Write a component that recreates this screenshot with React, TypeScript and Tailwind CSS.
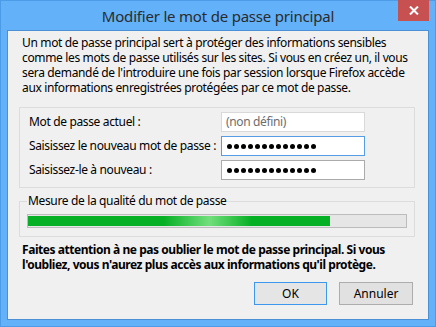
import React from 'react';

const font = { fontFamily: '"Noto Sans", "Open Sans", sans-serif' };

function Dots() {
  return (
    <div className="flex items-center gap-[2px] pl-[5px]">
      {Array.from({ length: 13 }).map((_, i) => (
        <span key={i} className="block w-[5px] h-[5px] rounded-full bg-black" />
      ))}
    </div>
  );
}

export default function App() {
  const intro = [
    'Un mot de passe principal sert à protéger des informations sensibles',
    'comme les mots de passe utilisés sur les sites. Si vous en créez un, il vous',
    "sera demandé de l'introduire une fois par session lorsque Firefox accède",
    'aux informations enregistrées protégées par ce mot de passe.',
  ];

  return (
    <div
      className="w-[436px] h-[327px] flex flex-col bg-[#62b1f9] border border-[#4c9be6] px-[6px] pb-[6px] text-black"
      style={font}
    >
      {/* title bar */}
      <div className="relative h-[29px] flex items-center justify-center">
        <span className="text-[15px] text-[#2b2b2b] tracking-[-0.2px] mt-[1px]">Modifier le mot de passe principal</span>
        <button className="absolute top-[-1px] right-0 w-[31px] h-[21px] bg-[#c75050] flex items-center justify-center">
          <svg width="10" height="9" viewBox="0 0 10 9">
            <path d="M1 0.5 L9 8.5 M9 0.5 L1 8.5" stroke="white" strokeWidth="2" />
          </svg>
        </button>
      </div>

      {/* client area */}
      <div className="flex-1 flex flex-col bg-[#f0f0f0] border border-[#4b8fd5]">
        <div className="pl-[14px] pt-[4px] text-[12px] leading-[15px] tracking-[-0.35px]">
          {intro.map((l) => (
            <div key={l} className="whitespace-nowrap">{l}</div>
          ))}
        </div>

        {/* fields group */}
        <div className="ml-[11px] mt-[12px] w-[396px] h-[81px] border border-[#dcdcdc] pt-[4px] flex flex-col gap-[4px] text-[12px] tracking-[-0.35px]">
          <div className="flex items-center h-[20px]">
            <div className="w-[201px] pl-[9px]">Mot de passe actuel :</div>
            <div className="w-[144px] h-[20px] bg-white border border-[#d9d9d9] flex items-center pl-[4px] text-[#6d6d6d]">
              (non défini)
            </div>
          </div>
          <div className="flex items-center h-[20px]">
            <div className="w-[201px] pl-[9px] whitespace-nowrap">Saisissez le nouveau mot de passe :</div>
            <div className="w-[144px] h-[20px] bg-white border border-[#569de5] flex items-center">
              <Dots />
            </div>
          </div>
          <div className="flex items-center h-[20px]">
            <div className="w-[201px] pl-[9px]">Saisissez-le à nouveau :</div>
            <div className="w-[144px] h-[20px] bg-white border border-[#ababab] flex items-center">
              <Dots />
            </div>
          </div>
        </div>

        {/* quality group */}
        <div className="relative ml-[11px] mt-[13px] w-[396px] h-[36px] border border-[#dcdcdc] pt-[12px] px-[7px]">
          <span className="absolute left-[7px] top-[-9px] px-[1px] bg-[#f0f0f0] text-[12px] leading-[15px] tracking-[-0.35px]">
            Mesure de la qualité du mot de passe
          </span>
          <div className="w-[380px] h-[14px] border border-[#bcbcbc] bg-[#e6e6e6] py-[1px]">
            <div className="w-[302px] h-full bg-[linear-gradient(90deg,#06b025_0%,#06b025_45%,#72df7c_60%,#06b025_74%,#06b025_100%)]" />
          </div>
        </div>

        <div className="pl-[14px] pt-[5px] text-[12px] leading-[15px] font-bold tracking-[-0.45px]">
          <div className="whitespace-nowrap">Faites attention à ne pas oublier le mot de passe principal. Si vous</div>
          <div className="whitespace-nowrap">l'oubliez, vous n'aurez plus accès aux informations qu'il protège.</div>
        </div>

        <div className="flex justify-end gap-[12px] pr-[15px] mt-[10px] text-[12px]">
          <button className="w-[73px] h-[23px] border border-[#3c97ef] bg-[#e5e5e5]">OK</button>
          <button className="w-[74px] h-[23px] border border-[#adadad] bg-[#e1e1e1]">Annuler</button>
        </div>
      </div>
    </div>
  );
}
